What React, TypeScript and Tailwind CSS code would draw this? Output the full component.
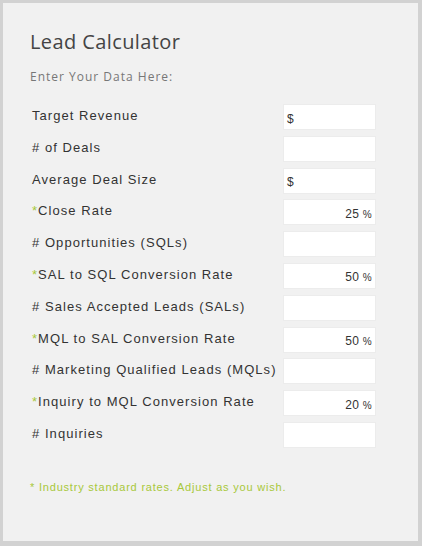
import React from 'react';

type Row = {
  label: string;
  star?: boolean;
  prefix?: string;
  value?: string;
};

const rows: Row[] = [
  { label: 'Target Revenue', prefix: '$' },
  { label: '# of Deals' },
  { label: 'Average Deal Size', prefix: '$' },
  { label: 'Close Rate', star: true, value: '25' },
  { label: '# Opportunities (SQLs)' },
  { label: 'SAL to SQL Conversion Rate', star: true, value: '50' },
  { label: '# Sales Accepted Leads (SALs)' },
  { label: 'MQL to SAL Conversion Rate', star: true, value: '50' },
  { label: '# Marketing Qualified Leads (MQLs)' },
  { label: 'Inquiry to MQL Conversion Rate', star: true, value: '20' },
  { label: '# Inquiries' },
];

export default function App() {
  return (
    <div className="w-[422px] h-[546px] bg-[#f1f1f1] border-[3px] border-r-[4px] border-b-[5px] border-[#d2d2d2] box-border">
      <div className="pl-[27px] pr-[42px] pt-[26px]">
        {/* Heading */}
        <h1 className="text-[20px] leading-[26px] tracking-[0.4px] text-[#444] font-[family-name:'Open_Sans',sans-serif]">
          Lead Calculator
        </h1>
        <p className="mt-[15px] text-[12px] leading-[14px] tracking-[1px] text-[#777] font-[family-name:'Open_Sans',sans-serif]">
          Enter Your Data Here:
        </p>

        {/* Calculator rows */}
        <div className="mt-[20px] flex flex-col gap-[5.8px] font-[family-name:'Liberation_Sans',Arial,sans-serif]">
          {rows.map((row) => (
            <div key={row.label} className="flex items-start justify-between h-[26px]">
              <span className="pl-[2px] pt-[4px] text-[13px] leading-[16px] tracking-[1.05px] text-[#333]">
                {row.star && <span className="text-[#a8c83a]">*</span>}
                {row.label}
              </span>
              <div className="w-[93px] h-[26px] bg-white border border-[#ececec] flex items-center px-[3px] text-[12px] text-[#333]">
                {row.prefix && <span className="pt-[3px]">{row.prefix}</span>}
                {row.value && (
                  <span className="ml-auto pt-[3px] tracking-[0.3px]">
                    {row.value} <span className="text-[10px]">%</span>
                  </span>
                )}
              </div>
            </div>
          ))}
        </div>

        <p className="mt-[32px] text-[11px] leading-[14px] tracking-[0.8px] text-[#a8c83a] font-[family-name:'Liberation_Sans',Arial,sans-serif]">
          * Industry standard rates. Adjust as you wish.
        </p>
      </div>
    </div>
  );
}
